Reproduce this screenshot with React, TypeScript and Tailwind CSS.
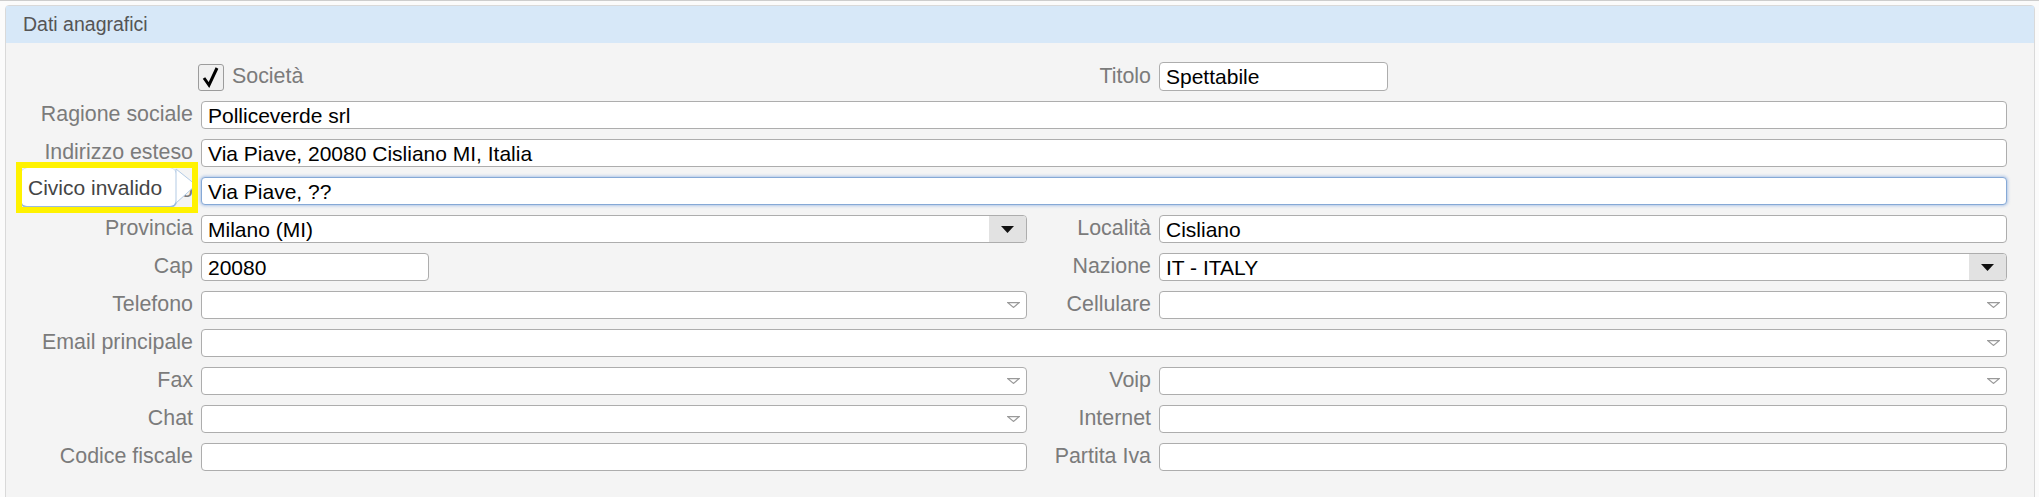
import React from 'react';

// --- small pieces ---
const Label: React.FC<{ text: string; className?: string }> = ({ text, className }) => (
  <div className={`flex items-center justify-end whitespace-nowrap text-[21.4px] leading-none text-[#7b7b7b] ${className ?? ''}`}>
    {text}
  </div>
);

const Field: React.FC<{ value?: string; className?: string; focused?: boolean }> = ({ value, className, focused }) => (
  <div
    className={`flex h-[28px] items-center rounded-[4px] border-[1.5px] bg-white pl-[6px] text-[21px] leading-none text-black ${
      focused ? 'border-[#86a9d6] shadow-[0_0_3px_1px_rgba(120,160,220,0.55)]' : 'border-[#adadad]'
    } ${className ?? ''}`}
  >
    {value}
  </div>
);

const Select: React.FC<{ value: string; className?: string }> = ({ value, className }) => (
  <div className={`flex h-[28px] items-stretch overflow-hidden rounded-[4px] border-[1.5px] border-[#adadad] bg-white text-[21px] leading-none text-black ${className ?? ''}`}>
    <div className="flex flex-1 items-center pl-[6px]">{value}</div>
    <div className="flex w-[37px] items-center justify-center bg-[#e2e2e2]">
      <svg width="13" height="7" viewBox="0 0 13 7">
        <path d="M0 0 L13 0 L6.5 7 Z" fill="#111" />
      </svg>
    </div>
  </div>
);

const Combo: React.FC<{ className?: string }> = ({ className }) => (
  <div className={`flex h-[28px] items-center justify-end rounded-[4px] border-[1.5px] border-[#adadad] bg-white pr-[6px] ${className ?? ''}`}>
    <svg width="13" height="6" viewBox="0 0 13 6">
      <path d="M0.8 0.6 L12.2 0.6 L6.5 5.4 Z" fill="none" stroke="#9a9a9a" strokeWidth="1.2" />
    </svg>
  </div>
);

export default function App() {
  return (
    <div className="h-[497px] w-[2039px] overflow-hidden border-t border-[#cdcdcd] bg-[#fbfbfb] pl-[5px] pr-[4px] pt-[4px] font-['Liberation_Sans',Arial,sans-serif]">
      <div className="h-[520px] rounded-t-[4px] border border-[#d9d9d9] bg-[#f4f4f4]">
        {/* header */}
        <div className="flex h-[37px] items-center bg-[#d7e8f8] pl-[17px] text-[19.5px] text-[#555]">Dati anagrafici</div>

        {/* form */}
        <div className="grid grid-cols-[187px_826px_116px_848px] auto-rows-[28px] gap-x-2 gap-y-[10px] pt-[20px]">
          {/* row 1 */}
          <div />
          <div className="flex items-center gap-2 -ml-[3px]">
            <div className="flex h-[27px] w-[26px] items-center justify-center rounded-[3px] border-[1.5px] border-[#9c9c9c] bg-[#f0f0f0]">
              <svg width="22" height="22" viewBox="0 0 22 22">
                <path d="M4 12 L9 19 L17 2" fill="none" stroke="#000" strokeWidth="3" strokeLinejoin="miter" />
              </svg>
            </div>
            <span className="text-[21.4px] leading-none text-[#7b7b7b]">Società</span>
          </div>
          <Label text="Titolo" />
          <Field value="Spettabile" className="w-[229px] -mt-[1px] h-[29px]" />

          {/* row 2 */}
          <Label text="Ragione sociale" />
          <Field value="Polliceverde srl" className="col-span-3" />

          {/* row 3 */}
          <Label text="Indirizzo esteso" />
          <Field value="Via Piave, 20080 Cisliano MI, Italia" className="col-span-3" />

          {/* row 4 */}
          <div className="relative">
            <Label text="Indirizzo" className="h-full" />
            {/* validation tooltip */}
            <div className="absolute left-[15px] top-[-9px] z-10 flex h-[38px] w-[155px] items-center rounded-[6px] bg-white pl-[7px] text-[21px] leading-none text-[#454545] shadow-[0_1px_0_1px_#9bbbe0]">
              Civico invalido
            </div>
            <svg className="absolute left-[166px] top-[-10px] z-10" width="30" height="40" viewBox="0 0 30 40">
              <path d="M4 2 L24 18 L4 36 Z" fill="#fff" stroke="#b3cbe5" strokeWidth="1" />
            </svg>
            <div className="absolute left-[10px] top-[-15px] z-20 h-[51px] w-[182px] border-[6px] border-[#fff200]" />
          </div>
          <Field value="Via Piave, ??" focused className="col-span-3" />

          {/* row 5 */}
          <Label text="Provincia" />
          <Select value="Milano (MI)" />
          <Label text="Località" />
          <Field value="Cisliano" />

          {/* row 6 */}
          <Label text="Cap" />
          <Field value="20080" className="w-[228px]" />
          <Label text="Nazione" />
          <Select value="IT - ITALY" />

          {/* row 7 */}
          <Label text="Telefono" />
          <Combo />
          <Label text="Cellulare" />
          <Combo />

          {/* row 8 */}
          <Label text="Email principale" />
          <Combo className="col-span-3" />

          {/* row 9 */}
          <Label text="Fax" />
          <Combo />
          <Label text="Voip" />
          <Combo />

          {/* row 10 */}
          <Label text="Chat" />
          <Combo />
          <Label text="Internet" />
          <Field />

          {/* row 11 */}
          <Label text="Codice fiscale" />
          <Field />
          <Label text="Partita Iva" />
          <Field />
        </div>
      </div>
    </div>
  );
}
